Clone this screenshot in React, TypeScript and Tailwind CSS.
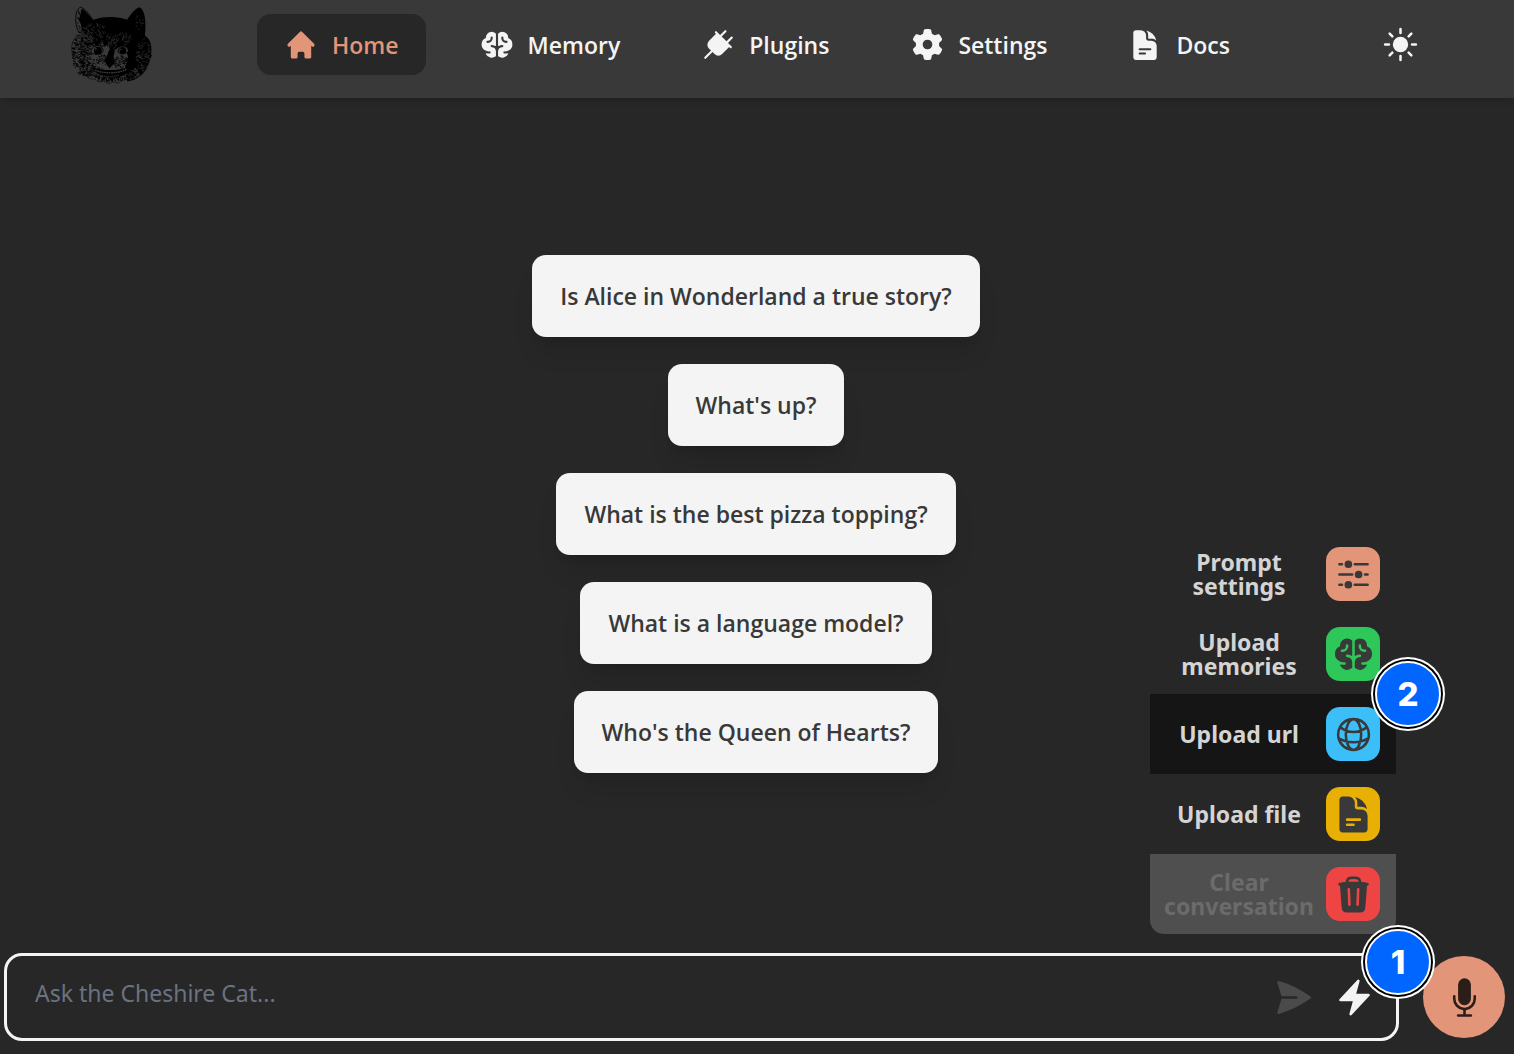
import { useState } from "react";
import type { ComponentType } from "react";
import { FaGear } from "react-icons/fa6";
import { HiHome } from "react-icons/hi";
import {
  HiAdjustmentsHorizontal,
  HiBolt,
  HiDocumentText,
  HiMicrophone,
  HiOutlineGlobeAlt,
  HiPaperAirplane,
  HiSun,
  HiTrash,
} from "react-icons/hi2";
import { PiBrainFill, PiPlugFill } from "react-icons/pi";

type Icon = ComponentType<{ className?: string }>;

const navItems: { label: string; icon: Icon; iconClass: string }[] = [
  { label: "Home", icon: HiHome, iconClass: "size-[34px]" },
  { label: "Memory", icon: PiBrainFill, iconClass: "size-[34px]" },
  { label: "Plugins", icon: PiPlugFill, iconClass: "size-[34px]" },
  { label: "Settings", icon: FaGear, iconClass: "size-[31px]" },
  { label: "Docs", icon: HiDocumentText, iconClass: "size-[34px]" },
];

const suggestions = [
  "Is Alice in Wonderland a true story?",
  "What's up?",
  "What is the best pizza topping?",
  "What is a language model?",
  "Who's the Queen of Hearts?",
];

const actions: { label: string; icon: Icon; row: string; tile: string; step?: string; disabled?: boolean }[] = [
  { label: "Prompt settings", icon: HiAdjustmentsHorizontal, row: "text-[#d4d4d4]", tile: "bg-[#e29578]" },
  { label: "Upload memories", icon: PiBrainFill, row: "text-[#d4d4d4]", tile: "bg-[#2ec85a]" },
  { label: "Upload url", icon: HiOutlineGlobeAlt, row: "bg-[#151515] text-[#d4d4d4]", tile: "bg-[#3cbef9]", step: "2" },
  { label: "Upload file", icon: HiDocumentText, row: "text-[#d4d4d4]", tile: "bg-[#e8b004]" },
  {
    label: "Clear conversation",
    icon: HiTrash,
    row: "rounded-b-[14px] bg-[#4f4f4f] text-[#6b6b6b]",
    tile: "bg-[#ef4444]",
    disabled: true,
  },
];

/* Engraving-like fur: short strokes scattered over elliptical patches. */
function fur(seed: number, n: number, cx: number, cy: number, rx: number, ry: number, len: number) {
  let s = seed;
  const rnd = () => {
    s = (s * 1103515245 + 12345) % 2147483648;
    return s / 2147483648;
  };
  let d = "";
  for (let i = 0; i < n; i++) {
    const a = rnd() * Math.PI * 2;
    const r = Math.sqrt(rnd());
    const x = cx + Math.cos(a) * r * rx;
    const y = cy + Math.sin(a) * r * ry;
    const dir = Math.atan2(y - 170, x - 180) + (rnd() - 0.5);
    const l = len * (0.4 + rnd());
    d += `M${x.toFixed(1)} ${y.toFixed(1)}l${(Math.cos(dir) * l).toFixed(1)} ${(Math.sin(dir) * l).toFixed(1)}`;
  }
  return d;
}

const darkFur = [
  fur(7, 170, 116, 122, 32, 40, 5),
  fur(11, 120, 88, 160, 20, 48, 4),
  fur(13, 60, 112, 178, 24, 22, 4),
  fur(23, 120, 170, 110, 50, 36, 5),
  fur(31, 110, 124, 212, 38, 16, 4),
  fur(37, 50, 165, 178, 34, 14, 3),
  fur(43, 130, 182, 230, 46, 12, 4),
  fur(57, 110, 272, 160, 30, 54, 4),
  fur(83, 60, 214, 186, 26, 18, 4),
  fur(91, 22, 92, 65, 9, 34, 4),
].join("");

const lightFur = [
  fur(101, 80, 132, 98, 38, 26, 5),
  fur(103, 70, 108, 124, 22, 24, 5),
  fur(109, 40, 180, 130, 22, 26, 4),
  fur(113, 40, 218, 116, 26, 20, 4),
  fur(127, 90, 280, 168, 22, 50, 4),
  fur(131, 16, 268, 62, 12, 30, 3),
  fur(137, 70, 240, 220, 28, 18, 5),
].join("");

function CatLogo({ className }: { className: string }) {
  return (
    <svg viewBox="60 12 250 240" className={className} role="img" aria-label="Cheshire Cat">
      <path d="M87 98C74 76 72 32 91 21c14 3 26 20 38 38l-14 14-14 22z" fill="none" stroke="#000" strokeWidth="2.5" />
      <path
        d="M96 25c12 8 22 20 32 35l24-7c26-4 56-4 80 6 10-16 24-34 37-38 20 8 20 56 17 86 14 8 20 26 19 44-1 32-12 62-34 78-10 8-24 14-38 16l-6-18 18-22c-6 6-14 8-22 8l8-22 4-20-6-20-16-12-18 10-4 22-2 22-8-6 2-30-10-26-8 10-10-20-14 22-10-16-18 18-10-12-14 10 4-22c6-20 4-44-6-62z"
        fill="#000"
      />
      <g fill="none" strokeLinecap="round">
        <path d={darkFur} stroke="#000" strokeWidth="2.4" />
        <path d={lightFur} stroke="#393939" strokeWidth="1.6" />
        <path
          d="M82 106c-12 12-19 28-16 46 0 20 8 38 20 48l8 18 14 8 10 10 16 2 12 8 16-2 14 8 14-6 16 4 10-8 16-4"
          stroke="#000"
          strokeWidth="2"
          strokeDasharray="6 4"
        />
      </g>
      <path d="M122 156c2-12 12-20 24-19 10 1 14 9 14 17-8 10-28 12-38 2z" fill="#393939" stroke="#000" strokeWidth="2.5" />
      <path d="M204 156c0-10 8-18 18-18 10 2 14 8 14 16-8 8-24 10-32 2z" fill="#393939" stroke="#000" strokeWidth="2.5" />
      <path d="M112 140c8-10 22-14 38-10M206 134c8-6 20-6 30 0" fill="none" stroke="#000" strokeWidth="3" />
      <ellipse cx="144" cy="152" rx="12" ry="12" fill="#000" />
      <ellipse cx="219" cy="152" rx="10" ry="11" fill="#000" />
      <circle cx="138" cy="147" r="2.5" fill="#4a4a4a" />
      <circle cx="213" cy="148" r="2" fill="#4a4a4a" />
      <path d="M178 150c-4 12-8 22-13 31 2 8 7 16 14 24 8-6 14-14 15-23-5-10-6-20-5-32z" fill="#000" />
      <path d="M126 198c12 10 32 12 48 12 24 2 56-2 72-16l10-8c-6 30-36 46-66 48-30 0-58-14-64-36z" fill="#000" />
      <path d="M136 211c22 10 70 12 96-4" fill="none" stroke="#3d3d3d" strokeWidth="4" strokeDasharray="5 2" />
      <path d="M150 226c18 6 40 6 58-1" fill="none" stroke="#393939" strokeWidth="4" strokeDasharray="3 3" />
      <path d="M110 186l28 6M106 196l26 2M150 178l12 4" fill="none" stroke="#000" strokeWidth="1.5" />
    </svg>
  );
}

function StepBadge({ step }: { step: string }) {
  return (
    <span className="flex size-[74px] items-center justify-center rounded-full bg-white">
      <span className="flex size-[70px] items-center justify-center rounded-full bg-black">
        <span className="flex size-[66px] items-center justify-center rounded-full border-2 border-white bg-[#0066ff] font-['Inter',sans-serif] text-[33px] leading-none font-extrabold text-white">
          {step}
        </span>
      </span>
    </span>
  );
}

export default function App() {
  const [message, setMessage] = useState("");

  return (
    <div className="flex min-h-screen flex-col bg-[#272727] font-['Noto_Sans',sans-serif] text-[23px] leading-6 text-[#f4f4f4]">
      <header className="grid grid-cols-[1fr_auto_1fr] items-center bg-[#393939] pt-[14px] pb-[23px] shadow-md">
        <a href="#home" className="-mt-[18px] -mb-4 ml-[70px] justify-self-start">
          <CatLogo className="h-20 w-[83px]" />
        </a>
        <nav className="flex gap-[27px] font-['Open_Sans',sans-serif] font-semibold">
          {navItems.map(({ label, icon: NavIcon, iconClass }, i) => (
            <a
              key={label}
              href={`#${label.toLowerCase()}`}
              aria-current={i === 0 ? "page" : undefined}
              className={`flex h-[61px] items-center gap-[14px] rounded-[14px] px-[27px] ${
                i === 0 ? "bg-[#272727] text-[#e29578]" : ""
              }`}
            >
              <span className="flex w-[34px] justify-center">
                <NavIcon className={iconClass} />
              </span>
              {label}
            </a>
          ))}
        </nav>
        <button type="button" aria-label="Toggle theme" className="mr-[93px] justify-self-end">
          <HiSun className="size-[41px]" />
        </button>
      </header>

      <main className="flex flex-1 flex-col items-center justify-center gap-[27px] pr-0.5">
        {suggestions.map((text) => (
          <button
            key={text}
            type="button"
            onClick={() => setMessage(text)}
            className="h-[82px] rounded-[14px] bg-[#f4f4f4] px-7 font-['Open_Sans',sans-serif] font-semibold text-[#393939] shadow-xl"
          >
            {text}
          </button>
        ))}
      </main>

      <footer className="mt-[23px] flex items-center gap-6 pr-[9px] pb-[13px] pl-1">
        <div className="relative flex h-[88px] flex-1 items-center rounded-[18px] border-[3px] border-[#f4f4f4] pr-[21px] pl-7">
          <input
            type="text"
            aria-label="Message"
            value={message}
            onChange={(e) => setMessage(e.target.value)}
            placeholder="Ask the Cheshire Cat..."
            className="h-full min-w-0 flex-1 bg-transparent pb-2 outline-none placeholder:text-[#6b7280]"
          />
          <button type="button" aria-label="Send" className="text-[#4a4a4a]">
            <HiPaperAirplane className="size-[41px]" />
          </button>
          <button type="button" aria-label="Quick actions" className="ml-5">
            <HiBolt className="size-[41px]" />
          </button>

          <ul className="absolute right-0 bottom-full mb-[22px] w-[246px]">
            {actions.map(({ label, icon: ActionIcon, row, tile, step, disabled }) => (
              <li key={label} className="relative">
                <button
                  type="button"
                  disabled={disabled}
                  className={`flex h-20 w-full items-center gap-3 pr-4 pl-[14px] font-bold ${row}`}
                >
                  <span className="flex-1 text-center">{label}</span>
                  <span className={`flex size-[54px] items-center justify-center rounded-[14px] text-[#393939] ${tile}`}>
                    <ActionIcon className="size-[41px]" />
                  </span>
                </button>
                {step && (
                  <span className="absolute -top-[37px] -right-[49px] z-10">
                    <StepBadge step={step} />
                  </span>
                )}
              </li>
            ))}
          </ul>

          <span className="absolute -top-[31px] -right-[39px] z-10">
            <StepBadge step="1" />
          </span>
        </div>
        <button
          type="button"
          aria-label="Record voice"
          className="flex size-[82px] items-center justify-center rounded-full bg-[#e29578] text-[#2b1d18]"
        >
          <HiMicrophone className="size-[41px]" />
        </button>
      </footer>
    </div>
  );
}
